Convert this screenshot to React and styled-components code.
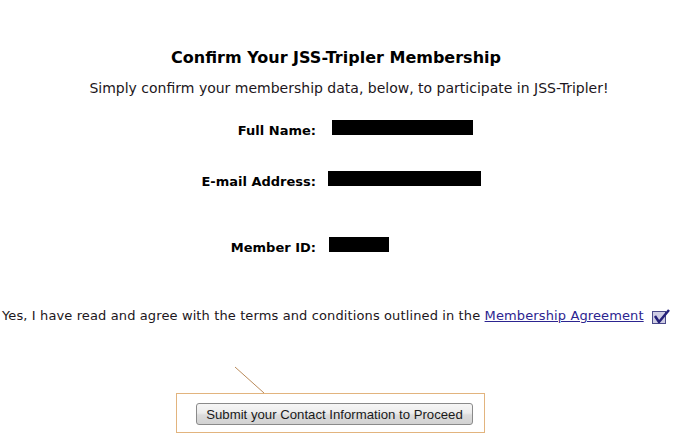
import React from 'react';
import styled, { createGlobalStyle } from 'styled-components';

const GlobalStyle = createGlobalStyle`
    body {
        margin: 0;
        background: #ffffff;
        font-family: "DejaVu Sans", Verdana, sans-serif;
    }
`;

const Page = styled.div`
    width: 681px;
    height: 448px;
    overflow: hidden;
    padding-top: 46px;
    box-sizing: border-box;
`;

const Title = styled.h1`
    margin: 0 9px 0 0;
    text-align: center;
    font-size: 16px;
    font-weight: bold;
    color: #000;
    line-height: 24px;
`;

const Subtitle = styled.p`
    margin: 9px 0 0 17px;
    text-align: center;
    font-size: 14px;
    color: #1c1620;
    line-height: 18px;
`;

const Form = styled.div`
    display: grid;
    grid-template-columns: 316px auto;
    column-gap: 12px;
    margin-top: 25px;
`;

const Label = styled.div`
    text-align: right;
    font-size: 13px;
    font-weight: bold;
    color: #000;
    line-height: 18px;
    margin-top: ${({ $top }) => $top}px;
`;

const Redacted = styled.div`
    background: #000;
    height: 15px;
    width: ${({ $w }) => $w}px;
    margin-left: ${({ $x }) => $x}px;
    margin-top: ${({ $top }) => $top - 2}px;
`;

const Agreement = styled.div`
    display: flex;
    align-items: center;
    gap: 7px;
    margin: 50px 0 0 2px;
    font-size: 13px;
    letter-spacing: 0.12px;
    color: #1c1620;
    line-height: 18px;
    white-space: nowrap;
`;

const Link = styled.a`
    color: #2c2490;
    text-decoration: underline;
    cursor: pointer;
`;

const ButtonArea = styled.div`
    position: relative;
    margin: 68px 0 0 176px;
    width: 309px;
    height: 40px;
    border: 1px solid #e2b47e;
    box-sizing: border-box;
    padding: 9px 0 0 19px;
`;

const Callout = styled.svg`
    position: absolute;
    left: 58px;
    top: -27px;
    overflow: visible;
`;

const SubmitButton = styled.button`
    font-family: "Liberation Sans", Arial, sans-serif;
    font-size: 13.2px;
    color: #1a1a1a;
    width: 277px;
    height: 22px;
    padding: 0;
    border: 1px solid #8a8a8a;
    border-radius: 3px;
    background: linear-gradient(#f6f6f6 0%, #ececec 45%, #dcdcdc 55%, #d2d2d2 100%);
    cursor: pointer;
`;

const CheckIcon = () => (
    <svg width="20" height="17" viewBox="0 0 20 17">
        <rect x="1.5" y="3.5" width="13" height="12" fill="#cfcde3" stroke="#4a4a8a" strokeWidth="1" />
        <path d="M4 8 L8 14 L18 2" fill="none" stroke="#24207a" strokeWidth="2.5" strokeLinejoin="round" />
    </svg>
);

const rows = [
    { label: 'Full Name:', top: 0, x: 4, w: 141 },
    { label: 'E-mail Address:', top: 33, x: 0, w: 153 },
    { label: 'Member ID:', top: 48, x: 1, w: 60 },
];

const App = () => {
    return (
        <Page>
            <GlobalStyle />
            <Title>Confirm Your JSS-Tripler Membership</Title>
            <Subtitle>Simply confirm your membership data, below, to participate in JSS-Tripler!</Subtitle>
            <Form>
                {rows.map((row) => (
                    <React.Fragment key={row.label}>
                        <Label $top={row.top}>{row.label}</Label>
                        <Redacted $top={row.top} $x={row.x} $w={row.w} />
                    </React.Fragment>
                ))}
            </Form>
            <Agreement>
                <span>
                    Yes, I have read and agree with the terms and conditions outlined in the{' '}
                    <Link>Membership Agreement</Link>
                </span>
                <CheckIcon />
            </Agreement>
            <ButtonArea>
                <Callout width="30" height="27">
                    <line x1="0" y1="0" x2="29" y2="26" stroke="#b98a5a" strokeWidth="1" />
                </Callout>
                <SubmitButton>Submit your Contact Information to Proceed</SubmitButton>
            </ButtonArea>
        </Page>
    );
};

export default App;
